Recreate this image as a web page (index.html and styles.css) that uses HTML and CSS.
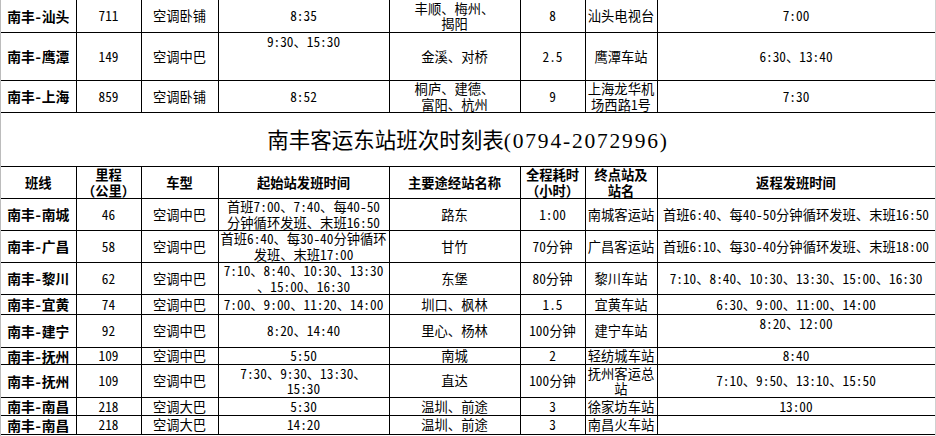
FILE: index.html
```html
<!DOCTYPE html>
<html lang="zh-CN">
<head>
<meta charset="utf-8">
<title>南丰客运东站班次时刻表</title>
<link rel="stylesheet" href="styles.css">
</head>
<body>
<div class="sheet">
<table class="grid">
<colgroup>
<col class="c1"><col class="c2"><col class="c3"><col class="c4"><col class="c5"><col class="c6"><col class="c7"><col class="c8">
</colgroup>
<tbody>
<tr class="r33">
<td class="line">南丰-汕头</td><td>711</td><td>空调卧铺</td><td>8:35</td><td>丰顺、梅州、<br>揭阳</td><td>8</td><td>汕头电视台</td><td>7:00</td>
</tr>
<tr class="r48">
<td class="line">南丰-鹰潭</td><td>149</td><td>空调中巴</td><td class="top">9:30、15:30</td><td>金溪、对桥</td><td>2.5</td><td>鹰潭车站</td><td>6:30、13:40</td>
</tr>
<tr class="r32">
<td class="line">南丰-上海</td><td>859</td><td>空调卧铺</td><td>8:52</td><td>桐庐、建德、<br>富阳、杭州</td><td>9</td><td>上海龙华机<br>场西路1号</td><td>7:30</td>
</tr>
<tr class="r54">
<td class="title" colspan="8">南丰客运东站班次时刻表<span class="phone">(0794-2072996)</span></td>
</tr>
<tr class="r32 head">
<td>班线</td><td>里程<br>（公里）</td><td>车型</td><td>起始站发班时间</td><td>主要途经站名称</td><td>全程耗时<br>（小时）</td><td>终点站及<br>站名</td><td>返程发班时间</td>
</tr>
<tr class="r32">
<td class="line">南丰-南城</td><td>46</td><td>空调中巴</td><td>首班7:00、7:40、每40-50<br>分钟循环发班、末班16:50</td><td>路东</td><td>1:00</td><td>南城客运站</td><td>首班6:40、每40-50分钟循环发班、末班16:50</td>
</tr>
<tr class="r32">
<td class="line">南丰-广昌</td><td>58</td><td>空调中巴</td><td>首班6:40、每30-40分钟循环<br>发班、末班17:00</td><td>甘竹</td><td>70分钟</td><td>广昌客运站</td><td>首班6:10、每30-40分钟循环发班、末班18:00</td>
</tr>
<tr class="r32">
<td class="line">南丰-黎川</td><td>62</td><td>空调中巴</td><td>7:10、8:40、10:30、13:30<br>、15:00、16:30</td><td>东堡</td><td>80分钟</td><td>黎川车站</td><td>7:10、8:40、10:30、13:30、15:00、16:30</td>
</tr>
<tr class="r20">
<td class="line">南丰-宜黄</td><td>74</td><td>空调中巴</td><td>7:00、9:00、11:20、14:00</td><td>圳口、枫林</td><td>1.5</td><td>宜黄车站</td><td>6:30、9:00、11:00、14:00</td>
</tr>
<tr class="r33">
<td class="line">南丰-建宁</td><td>92</td><td>空调中巴</td><td>8:20、14:40</td><td>里心、杨林</td><td>100分钟</td><td>建宁车站</td><td class="top">8:20、12:00</td>
</tr>
<tr class="r17">
<td class="line">南丰-抚州</td><td>109</td><td>空调中巴</td><td>5:50</td><td>南城</td><td>2</td><td>轻纺城车站</td><td>8:40</td>
</tr>
<tr class="r33">
<td class="line">南丰-抚州</td><td>109</td><td>空调中巴</td><td>7:30、9:30、13:30、<br>15:30</td><td>直达</td><td>100分钟</td><td>抚州客运总<br>站</td><td>7:10、9:50、13:10、15:50</td>
</tr>
<tr class="r18">
<td class="line">南丰-南昌</td><td>218</td><td>空调大巴</td><td>5:30</td><td>温圳、前途</td><td>3</td><td>徐家坊车站</td><td>13:00</td>
</tr>
<tr class="r19">
<td class="line">南丰-南昌</td><td>218</td><td>空调大巴</td><td>14:20</td><td>温圳、前途</td><td>3</td><td>南昌火车站</td><td></td>
</tr>
</tbody>
</table>
</div>
</body>
</html>
```
FILE: styles.css
```css
html, body {
  margin: 0;
  padding: 0;
  background: #ffffff;
}

.sheet {
  width: 934px;
  height: 436px;
  overflow: hidden;
  border-left: 1px solid #bcbcbc;
  border-right: 1px solid #d0d0d0;
  background: #ffffff;
}

.grid {
  width: 934px;
  margin-top: -1px;
  border-collapse: collapse;
  table-layout: fixed;
  font-family: "Noto Sans CJK SC", sans-serif;
  font-size: 13.3px;
  line-height: 15.5px;
  color: #000000;
  font-feature-settings: "hwid" 1;
}

.c1 { width: 75px; }
.c2 { width: 65px; }
.c3 { width: 77px; }
.c4 { width: 171px; }
.c5 { width: 131px; }
.c6 { width: 65px; }
.c7 { width: 72px; }
.c8 { width: 278px; }

.grid td {
  border: 1px solid #000000;
  padding: 0;
  text-align: center;
  vertical-align: middle;
  white-space: nowrap;
}

.grid tr > td:first-child {
  border-left: none;
}

.grid td.top {
  vertical-align: top;
  padding-top: 1px;
}

.grid td.line {
  font-weight: 700;
  font-size: 13.8px;
  line-height: 15px;
}

.head td {
  font-weight: 700;
  font-feature-settings: normal;
}

.grid td.title {
  border-left: none;
  border-right: none;
  padding-top: 3px;
  font-family: "Liberation Serif", "Noto Sans CJK SC", serif;
  font-size: 21.5px;
  line-height: 24px;
  font-weight: 400;
  font-feature-settings: normal;
}

.phone {
  letter-spacing: 1.8px;
}

.r17 { height: 17px; }
.r18 { height: 18px; }
.r19 { height: 19px; }
.r20 { height: 20px; }
.r32 { height: 32px; }
.r33 { height: 33px; }
.r48 { height: 48px; }
.r54 { height: 54px; }
```
